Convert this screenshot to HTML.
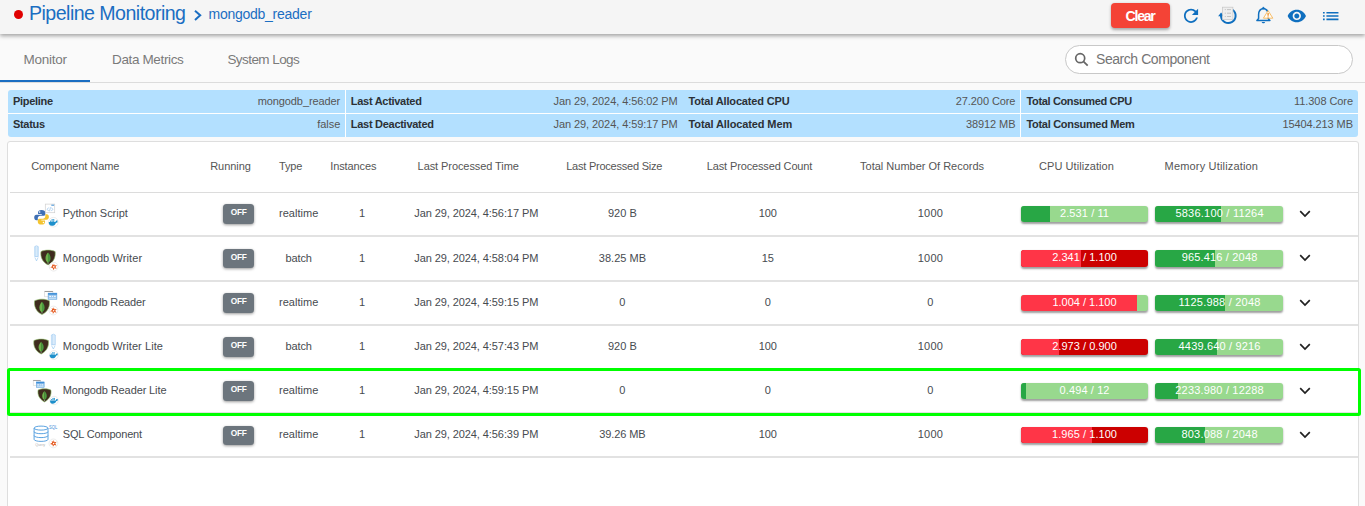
<!DOCTYPE html>
<html lang="en"><head><meta charset="utf-8"><title>Pipeline Monitoring</title>
<style>
html,body{margin:0;padding:0}
body{width:1365px;height:506px;overflow:hidden;position:relative;background:#fafafa;font-family:"Liberation Sans",sans-serif}
.t{position:absolute;white-space:nowrap;display:block}
.abs{position:absolute}
.topbar{position:absolute;left:0;top:0;width:1365px;height:33.8px;background:#f5f5f5;box-shadow:0 2px 4px rgba(0,0,0,.35)}
.dot{position:absolute;left:14px;top:10px;width:9px;height:9px;border-radius:50%;background:#e00000}
.clear{position:absolute;left:1111px;top:3px;width:59px;height:25px;border-radius:4px;background:#f44336;box-shadow:0 1.5px 3px rgba(0,0,0,.32)}
.tabline{position:absolute;left:0;top:82px;width:1365px;height:1px;background:#dcdcdc}
.tabink{position:absolute;left:0;top:80px;width:90px;height:2px;background:#1b6ec2}
.search{position:absolute;left:1065px;top:45px;width:288px;height:28.8px;border:1px solid #c8c8c8;border-radius:15px;background:#fff;box-sizing:border-box}
.info{position:absolute;left:7.5px;top:90px;width:1350.5px;height:47.4px;background:#b3e0ff;border-radius:3px}
.info .h{position:absolute;left:0;top:23px;width:100%;height:1px;background:#fff}
.info .v{position:absolute;top:0;width:1.5px;height:100%;background:#fff}
.card{position:absolute;left:7px;top:141px;width:1352px;height:380px;background:#fff;border:1px solid #dedede;border-radius:3px;box-sizing:border-box}
.hl{position:absolute;left:10px;top:192px;width:1348px;height:1px;background:#dcdcdc}
.rl{position:absolute;left:10px;width:1348px;height:2px;background:#e2e2e2}
.bar{position:absolute;height:16.3px;border-radius:3px;overflow:hidden;box-shadow:0 1.5px 2px rgba(0,0,0,.38)}
.bar i{position:absolute;left:0;top:0;height:100%;display:block}
.off{position:absolute;left:223px;width:30.8px;height:19.6px;border-radius:3.5px;background:#6c757d;box-shadow:0 1px 3px rgba(0,0,0,.4)}
.chev{position:absolute;left:1298px}
.sel{position:absolute;left:7.4px;top:367.8px;width:1353.5px;height:48px;border:3px solid #00ff00;border-radius:2.5px;box-sizing:border-box}

</style></head>
<body>
<div class="topbar"></div>
<div class="dot"></div>
<div class="clear"></div>
<div class="tabline"></div>
<div class="tabink"></div>
<div class="search"></div>
<div class="info"><div class="h"></div><div class="v" style="left:337px"></div><div class="v" style="left:1012px"></div></div>
<div class="card"></div>
<div class="hl"></div>

<div class="bar" style="left:1021px;top:205.9px;width:127px;background:#98d98e"><i style="width:29.2px;background:#28a745"></i></div>
<div class="bar" style="left:1155px;top:205.9px;width:128px;background:#98d98e"><i style="width:66.3px;background:#28a745"></i></div>
<div class="off" style="top:204.4px"></div>
<svg class="chev" style="top:208.8px" width="14" height="10" viewBox="0 0 14 10"><path d="M2.2 2.2 L7 7 L11.8 2.2" fill="none" stroke="#212121" stroke-width="1.7"/></svg>
<div class="rl" style="top:235.0px"></div>
<div class="bar" style="left:1021px;top:250.3px;width:127px;background:#cc0000"><i style="width:59.7px;background:#ff3547"></i></div>
<div class="bar" style="left:1155px;top:250.3px;width:128px;background:#98d98e"><i style="width:60.3px;background:#28a745"></i></div>
<div class="off" style="top:248.8px"></div>
<svg class="chev" style="top:253.2px" width="14" height="10" viewBox="0 0 14 10"><path d="M2.2 2.2 L7 7 L11.8 2.2" fill="none" stroke="#212121" stroke-width="1.7"/></svg>
<div class="rl" style="top:280.0px"></div>
<div class="bar" style="left:1021px;top:294.6px;width:127px;background:#98d98e"><i style="width:115.9px;background:#ff3547"></i></div>
<div class="bar" style="left:1155px;top:294.6px;width:128px;background:#98d98e"><i style="width:70.4px;background:#28a745"></i></div>
<div class="off" style="top:293.1px"></div>
<svg class="chev" style="top:297.5px" width="14" height="10" viewBox="0 0 14 10"><path d="M2.2 2.2 L7 7 L11.8 2.2" fill="none" stroke="#212121" stroke-width="1.7"/></svg>
<div class="rl" style="top:324.0px"></div>
<div class="bar" style="left:1021px;top:338.9px;width:127px;background:#cc0000"><i style="width:38.4px;background:#ff3547"></i></div>
<div class="bar" style="left:1155px;top:338.9px;width:128px;background:#98d98e"><i style="width:61.7px;background:#28a745"></i></div>
<div class="off" style="top:337.4px"></div>
<svg class="chev" style="top:341.8px" width="14" height="10" viewBox="0 0 14 10"><path d="M2.2 2.2 L7 7 L11.8 2.2" fill="none" stroke="#212121" stroke-width="1.7"/></svg>
<div class="rl" style="top:368.0px"></div>
<div class="bar" style="left:1021px;top:382.9px;width:127px;background:#98d98e"><i style="width:5.2px;background:#28a745"></i></div>
<div class="bar" style="left:1155px;top:382.9px;width:128px;background:#98d98e"><i style="width:23.3px;background:#28a745"></i></div>
<div class="off" style="top:381.4px"></div>
<svg class="chev" style="top:385.8px" width="14" height="10" viewBox="0 0 14 10"><path d="M2.2 2.2 L7 7 L11.8 2.2" fill="none" stroke="#212121" stroke-width="1.7"/></svg>
<div class="rl" style="top:412.0px"></div>
<div class="bar" style="left:1021px;top:427.0px;width:127px;background:#cc0000"><i style="width:71.1px;background:#ff3547"></i></div>
<div class="bar" style="left:1155px;top:427.0px;width:128px;background:#98d98e"><i style="width:50.2px;background:#28a745"></i></div>
<div class="off" style="top:425.5px"></div>
<svg class="chev" style="top:429.9px" width="14" height="10" viewBox="0 0 14 10"><path d="M2.2 2.2 L7 7 L11.8 2.2" fill="none" stroke="#212121" stroke-width="1.7"/></svg>
<div class="rl" style="top:456.0px"></div>
<svg class="abs" style="left:0;top:0" width="1365" height="506" viewBox="0 0 1365 506">
<path transform="translate(1180.4 5.2) scale(.885)" fill="#0f6fbf" d="M17.65 6.35C16.2 4.9 14.21 4 12 4c-4.42 0-7.99 3.58-7.99 8s3.57 8 7.99 8c3.73 0 6.84-2.55 7.73-6h-2.08c-.82 2.33-3.04 4-5.65 4-3.31 0-6-2.69-6-6s2.69-6 6-6c1.66 0 3.14.69 4.22 1.78L13 11h7V4l-2.35 2.35z"/>
<path d="M1232.49 9.72 A7.3 7.3 0 1 1 1221.00 16.00" fill="none" stroke="#0f6fbf" stroke-width="2"/>
<path d="M1218.10 16.30 L1221.10 12.50 L1223.90 16.30Z" fill="#0f6fbf"/>
<rect x="1222.6" y="7.2" width="10.3" height="12.3" fill="#eeeeee" stroke="#c6c6c6" stroke-width=".7"/>
<path d="M1224.8 9.6 h1 M1227 9.6 h4" stroke="#bdbdbd" stroke-width=".9"/>
<path d="M1224.8 13.2 h1 M1227 13.2 h4" stroke="#bdbdbd" stroke-width=".9"/>
<path d="M1224.8 16.5 h1 M1227 16.5 h4" stroke="#bdbdbd" stroke-width=".9"/>
<path d="M1263.4 8.4 C1259.9 8.9 1258.6 11.6 1258.6 14.6 V18.6 L1256.9 20.4 H1269.9 L1268.2 18.6 V14.6 C1268.2 11.6 1266.9 8.9 1263.4 8.4Z" fill="none" stroke="#0f6fbf" stroke-width="1.5" stroke-linejoin="round"/>
<path d="M1262.1 8.8 L1263.4 6.9 L1264.7 8.8Z" fill="#0f6fbf" stroke="#0f6fbf" stroke-width=".8"/>
<path d="M1261.7 21.9 H1265.1 C1264.9 23.6 1261.9 23.6 1261.7 21.9Z" fill="#0f6fbf"/>
<path d="M1268.1 10.6 L1272.8 18.2 H1263.4Z" fill="#fffdf8" stroke="#f5a83a" stroke-width=".75" stroke-linejoin="round"/>
<path d="M1268.1 12.9 V15.7 M1268.1 16.5 V17.5" stroke="#ee8a1c" stroke-width="1.25"/>
<path transform="translate(1286.8 5.9) scale(.8333)" fill="#0f6fbf" d="M12 4.5C7 4.5 2.73 7.61 1 12c1.73 4.39 6 7.5 11 7.5s9.27-3.11 11-7.5c-1.73-4.39-6-7.5-11-7.5zM12 17c-2.76 0-5-2.24-5-5s2.24-5 5-5 5 2.24 5 5-2.24 5-5 5zm0-8c-1.66 0-3 1.34-3 3s1.34 3 3 3 3-1.34 3-3-1.34-3-3-3z"/>
<path transform="translate(1320.4 6.2) scale(.86 .82)" fill="#0f6fbf" d="M3 13h2v-2H3v2zm0 4h2v-2H3v2zm0-8h2V7H3v2zm4 4h14v-2H7v2zm0 4h14v-2H7v2zM7 7v2h14V7H7z"/>
<path d="M195 10.7 L200.2 15.3 L195 19.9" fill="none" stroke="#1b6ec2" stroke-width="2"/>
<circle cx="1080.2" cy="58.2" r="4.5" fill="none" stroke="#666" stroke-width="1.7"/><path d="M1083.6 61.6 L1087.7 65.6" stroke="#666" stroke-width="1.8"/>
<g transform="translate(34.2 209.9) scale(0.9932432432432432)"><path d="M7.4 0 C5 0 3.9 1 3.9 2.6 V4.2 H7.6 V4.9 H2.3 C0.8 4.9 0 6.2 0 7.6 C0 9.2 0.8 10.3 2.2 10.3 H3.6 V8.4 C3.6 7 4.8 6 6.1 6 H9.4 C10.5 6 11.2 5.2 11.2 4.1 V2.6 C11.2 1 9.8 0 7.4 0 Z" fill="#3e6fb4"/><circle cx="5.5" cy="2.1" r=".75" fill="#fff"/><g transform="rotate(180 7.4 7.4)"><path d="M7.4 0 C5 0 3.9 1 3.9 2.6 V4.2 H7.6 V4.9 H2.3 C0.8 4.9 0 6.2 0 7.6 C0 9.2 0.8 10.3 2.2 10.3 H3.6 V8.4 C3.6 7 4.8 6 6.1 6 H9.4 C10.5 6 11.2 5.2 11.2 4.1 V2.6 C11.2 1 9.8 0 7.4 0 Z" fill="#f4c430"/><circle cx="5.5" cy="2.1" r=".75" fill="#fff"/></g></g>
<rect x="45.3" y="204.1" width="9.4" height="8.6" fill="#fff" stroke="#cfcfcf" stroke-width=".7"/><rect x="51.3" y="204.6" width="2.8" height="1.2" fill="#5aa0dc"/><path d="M48.699999999999996 207.5 L47.199999999999996 209.29999999999998 L48.699999999999996 211.1 M51.3 207.5 L52.8 209.29999999999998 L51.3 211.1 M50.5 207.29999999999998 L49.5 211.29999999999998" fill="none" stroke="#9cc7ee" stroke-width=".8"/>
<circle cx="53.4" cy="222.2" r="4.8" fill="#fff" stroke="#e4e4e4" stroke-width=".7"/><g transform="translate(53.3 222.29999999999998) scale(1.2730434782608695)" fill="#1d8fcb"><path d="M-3.6 -0.2 H1.6 C1.9 -1.3 2.6 -1.7 3.5 -1.3 C3.1 -0.9 3.1 -0.5 3.4 -0.1 C2.9 0.3 2.5 0.3 2.1 0.3 C1.6 2 0.3 2.8 -1.2 2.8 C-2.8 2.8 -3.6 1.6 -3.6 -0.2Z"/><rect x="-2.6" y="-1.3" width="1" height=".9"/><rect x="-1.4" y="-1.3" width="1" height=".9"/><rect x="-0.2" y="-1.3" width="1" height=".9"/><rect x="-1.4" y="-2.4" width="1" height=".9"/><rect x="-0.2" y="-2.4" width="1" height=".9"/></g>
<g fill="none" stroke="#8fc3f0" stroke-width=".6"><path d="M34.70 256.56 V246.60 Q36.50 245.00 38.30 246.60 V256.56 Z"/><path d="M35.80 246.40 V256.56 M37.20 246.40 V256.56"/><path d="M34.90 257.46 L36.50 260.90 L38.10 257.46"/></g>
<path d="M48.05 250.10 C45.40 250.10 42.76 250.69 40.99 251.58 C40.26 256.76 42.17 261.94 48.05 264.90 C53.93 261.94 55.84 256.76 55.11 251.58 C53.34 250.69 50.70 250.10 48.05 250.10Z" fill="#3f2c1e" stroke="#8fc06a" stroke-width=".6"/><path d="M48.05 252.62 C45.99 254.54 44.96 257.50 45.84 260.16 C46.43 261.64 47.61 262.53 48.05 262.98Z" fill="#6db24b"/><path d="M48.05 252.62 C50.11 254.54 51.14 257.50 50.26 260.16 C49.67 261.64 48.49 262.53 48.05 262.98Z" fill="#4a9a3f"/><path d="M48.05 262.53 L48.05 264.01" stroke="#b9c7c3" stroke-width=".6"/>
<circle cx="53.6" cy="266.7" r="4.4" fill="#fff" stroke="#e4e4e4" stroke-width=".7"/><g transform="translate(53.6 266.7) scale(1.0713043478260873)"><path d="M0.3 -3.1 L1.0 -1.1 L3.1 -1.5 L1.7 0.2 L2.9 2.0 L0.7 1.5 L-0.4 3.2 L-0.8 1.2 L-3.1 0.6 L-1.2 -0.5 L-1.6 -2.4 L-0.2 -1.3Z" fill="#e4561b"/><circle cx="0.2" cy="0.2" r=".75" fill="#fff"/></g>
<path d="M42.00 299.20 C39.23 299.20 36.46 299.82 34.61 300.74 C33.84 306.13 35.84 311.52 42.00 314.60 C48.16 311.52 50.16 306.13 49.39 300.74 C47.54 299.82 44.77 299.20 42.00 299.20Z" fill="#3f2c1e" stroke="#8fc06a" stroke-width=".6"/><path d="M42.00 301.82 C39.84 303.82 38.77 306.90 39.69 309.67 C40.31 311.21 41.54 312.14 42.00 312.60Z" fill="#6db24b"/><path d="M42.00 301.82 C44.16 303.82 45.23 306.90 44.31 309.67 C43.69 311.21 42.46 312.14 42.00 312.60Z" fill="#4a9a3f"/><path d="M42.00 312.14 L42.00 313.68" stroke="#b9c7c3" stroke-width=".6"/>
<rect x="44.70" y="291.20" width="8.2" height="5.6" fill="#fff" stroke="#cfcfcf" stroke-width=".6"/><rect x="44.70" y="291.00" width="8.2" height="1" fill="#9a9a9a"/><rect x="48.10" y="293.10" width="8.8" height="6.2" fill="#9cc7ee" stroke="#5a9fdc" stroke-width=".5"/><rect x="48.10" y="293.10" width="8.8" height="1.6" fill="#3f8fd8"/><path d="M49.30 296.40 h1.8 m1 0 h1 m1 0 h1.6" stroke="#fff" stroke-width="1"/><path d="M48.90 298.30 h7.2" stroke="#d9ecfb" stroke-width=".7"/>
<circle cx="53.4" cy="310.5" r="4.4" fill="#fff" stroke="#e4e4e4" stroke-width=".7"/><g transform="translate(53.4 310.5) scale(1.0713043478260873)"><path d="M0.3 -3.1 L1.0 -1.1 L3.1 -1.5 L1.7 0.2 L2.9 2.0 L0.7 1.5 L-0.4 3.2 L-0.8 1.2 L-3.1 0.6 L-1.2 -0.5 L-1.6 -2.4 L-0.2 -1.3Z" fill="#e4561b"/><circle cx="0.2" cy="0.2" r=".75" fill="#fff"/></g>
<path d="M41.15 339.10 C38.43 339.10 35.71 339.70 33.90 340.59 C33.15 345.81 35.11 351.02 41.15 354.00 C47.19 351.02 49.15 345.81 48.40 340.59 C46.59 339.70 43.87 339.10 41.15 339.10Z" fill="#3f2c1e" stroke="#8fc06a" stroke-width=".6"/><path d="M41.15 341.63 C39.04 343.57 37.98 346.55 38.88 349.23 C39.49 350.72 40.70 351.62 41.15 352.06Z" fill="#6db24b"/><path d="M41.15 341.63 C43.26 343.57 44.32 346.55 43.41 349.23 C42.81 350.72 41.60 351.62 41.15 352.06Z" fill="#4a9a3f"/><path d="M41.15 351.62 L41.15 353.11" stroke="#b9c7c3" stroke-width=".6"/>
<g fill="none" stroke="#8fc3f0" stroke-width=".6"><path d="M51.40 344.74 V335.00 Q53.35 333.40 55.30 335.00 V344.74 Z"/><path d="M52.65 334.80 V344.74 M54.05 334.80 V344.74"/><path d="M51.60 345.64 L53.35 349.00 L55.10 345.64"/></g>
<circle cx="53.9" cy="355" r="4.4" fill="#fff" stroke="#e4e4e4" stroke-width=".7"/><g transform="translate(53.8 355.1) scale(1.1669565217391307)" fill="#1d8fcb"><path d="M-3.6 -0.2 H1.6 C1.9 -1.3 2.6 -1.7 3.5 -1.3 C3.1 -0.9 3.1 -0.5 3.4 -0.1 C2.9 0.3 2.5 0.3 2.1 0.3 C1.6 2 0.3 2.8 -1.2 2.8 C-2.8 2.8 -3.6 1.6 -3.6 -0.2Z"/><rect x="-2.6" y="-1.3" width="1" height=".9"/><rect x="-1.4" y="-1.3" width="1" height=".9"/><rect x="-0.2" y="-1.3" width="1" height=".9"/><rect x="-1.4" y="-2.4" width="1" height=".9"/><rect x="-0.2" y="-2.4" width="1" height=".9"/></g>
<path d="M44.50 388.80 C42.09 388.80 39.68 389.32 38.07 390.11 C37.40 394.69 39.14 399.28 44.50 401.90 C49.86 399.28 51.60 394.69 50.93 390.11 C49.32 389.32 46.91 388.80 44.50 388.80Z" fill="#3f2c1e" stroke="#8fc06a" stroke-width=".6"/><path d="M44.50 391.03 C42.62 392.73 41.69 395.35 42.49 397.71 C43.03 399.02 44.10 399.80 44.50 400.20Z" fill="#6db24b"/><path d="M44.50 391.03 C46.38 392.73 47.31 395.35 46.51 397.71 C45.97 399.02 44.90 399.80 44.50 400.20Z" fill="#4a9a3f"/><path d="M44.50 399.80 L44.50 401.11" stroke="#b9c7c3" stroke-width=".6"/>
<g transform="translate(33.2 380.2) scale(.9)"><rect x="0.00" y="0.00" width="8.2" height="5.6" fill="#fff" stroke="#cfcfcf" stroke-width=".6"/><rect x="0.00" y="-0.20" width="8.2" height="1" fill="#9a9a9a"/><rect x="3.40" y="1.90" width="8.8" height="6.2" fill="#9cc7ee" stroke="#5a9fdc" stroke-width=".5"/><rect x="3.40" y="1.90" width="8.8" height="1.6" fill="#3f8fd8"/><path d="M4.60 5.20 h1.8 m1 0 h1 m1 0 h1.6" stroke="#fff" stroke-width="1"/><path d="M4.20 7.10 h7.2" stroke="#d9ecfb" stroke-width=".7"/></g>
<circle cx="54.1" cy="400.5" r="4.2" fill="#fff" stroke="#e4e4e4" stroke-width=".7"/><g transform="translate(54.0 400.6) scale(1.113913043478261)" fill="#1d8fcb"><path d="M-3.6 -0.2 H1.6 C1.9 -1.3 2.6 -1.7 3.5 -1.3 C3.1 -0.9 3.1 -0.5 3.4 -0.1 C2.9 0.3 2.5 0.3 2.1 0.3 C1.6 2 0.3 2.8 -1.2 2.8 C-2.8 2.8 -3.6 1.6 -3.6 -0.2Z"/><rect x="-2.6" y="-1.3" width="1" height=".9"/><rect x="-1.4" y="-1.3" width="1" height=".9"/><rect x="-0.2" y="-1.3" width="1" height=".9"/><rect x="-1.4" y="-2.4" width="1" height=".9"/><rect x="-0.2" y="-2.4" width="1" height=".9"/></g>
<g fill="none" stroke="#4a98dc" stroke-width=".9"><ellipse cx="41.05" cy="428.10" rx="6.95" ry="2.0"/><path d="M34.10 428.10 V439.40 M48.00 428.10 V439.40"/><path d="M34.10 431.70 A6.95 2.0 0 0 0 48.00 431.70"/><path d="M34.10 435.60 A6.95 2.0 0 0 0 48.00 435.60"/><path d="M34.10 439.40 A6.95 2.0 0 0 0 48.00 439.40"/></g><text x="49" y="428.9" font-family="Liberation Sans, sans-serif" font-size="4.6" fill="#3f8fd8" textLength="8.2" lengthAdjust="spacingAndGlyphs">SQL</text><text x="35.2" y="446" font-family="Liberation Sans, sans-serif" font-size="3.8" fill="#b0b0b0" textLength="10" lengthAdjust="spacingAndGlyphs">Query</text>
<circle cx="53.4" cy="443.4" r="4.4" fill="#fff" stroke="#e4e4e4" stroke-width=".7"/><g transform="translate(53.4 443.4) scale(1.0713043478260873)"><path d="M0.3 -3.1 L1.0 -1.1 L3.1 -1.5 L1.7 0.2 L2.9 2.0 L0.7 1.5 L-0.4 3.2 L-0.8 1.2 L-3.1 0.6 L-1.2 -0.5 L-1.6 -2.4 L-0.2 -1.3Z" fill="#e4561b"/><circle cx="0.2" cy="0.2" r=".75" fill="#fff"/></g>
</svg>
<span class="t" style="left:29.00px;top:0.61px;font-size:19.6px;line-height:25px;letter-spacing:-0.536px;color:#1b6ec2;">Pipeline Monitoring</span>
<span class="t" style="left:208.50px;top:5.15px;font-size:14px;line-height:18px;letter-spacing:-0.257px;color:#1b6ec2;">mongodb_reader</span>
<span class="t" style="left:1125.60px;top:6.78px;font-size:14.2px;line-height:18px;letter-spacing:-1.325px;color:#ffffff;font-weight:700;">Clear</span>
<span class="t" style="left:23.50px;top:51.32px;font-size:13.5px;line-height:18px;letter-spacing:-0.253px;color:#7a7a7a;">Monitor</span>
<span class="t" style="left:112.00px;top:51.32px;font-size:13.5px;line-height:18px;letter-spacing:-0.362px;color:#7a7a7a;">Data Metrics</span>
<span class="t" style="left:227.40px;top:51.32px;font-size:13.5px;line-height:18px;letter-spacing:-0.565px;color:#7a7a7a;">System Logs</span>
<span class="t" style="left:1096.00px;top:50.45px;font-size:14px;line-height:18px;letter-spacing:-0.443px;color:#757575;">Search Component</span>
<span class="t" style="left:13.00px;top:94.19px;font-size:11px;line-height:14px;letter-spacing:-0.312px;color:#2c3136;font-weight:700;">Pipeline</span>
<span class="t" style="left:257.67px;top:94.19px;font-size:11px;line-height:14px;letter-spacing:-0.090px;color:#555;">mongodb_reader</span>
<span class="t" style="left:13.00px;top:117.09px;font-size:11px;line-height:14px;letter-spacing:-0.325px;color:#2c3136;font-weight:700;">Status</span>
<span class="t" style="left:317.33px;top:117.09px;font-size:11px;line-height:14px;letter-spacing:-0.070px;color:#555;">false</span>
<span class="t" style="left:350.80px;top:94.19px;font-size:11px;line-height:14px;letter-spacing:-0.284px;color:#2c3136;font-weight:700;">Last Activated</span>
<span class="t" style="left:553.53px;top:94.19px;font-size:11px;line-height:14px;letter-spacing:-0.079px;color:#555;">Jan 29, 2024, 4:56:02 PM</span>
<span class="t" style="left:350.80px;top:117.09px;font-size:11px;line-height:14px;letter-spacing:-0.282px;color:#2c3136;font-weight:700;">Last Deactivated</span>
<span class="t" style="left:553.53px;top:117.09px;font-size:11px;line-height:14px;letter-spacing:-0.079px;color:#555;">Jan 29, 2024, 4:59:17 PM</span>
<span class="t" style="left:688.50px;top:94.19px;font-size:11px;line-height:14px;letter-spacing:-0.150px;color:#2c3136;font-weight:700;">Total Allocated CPU</span>
<span class="t" style="left:955.78px;top:94.19px;font-size:11px;line-height:14px;letter-spacing:-0.083px;color:#555;">27.200 Core</span>
<span class="t" style="left:688.50px;top:117.09px;font-size:11px;line-height:14px;letter-spacing:-0.114px;color:#2c3136;font-weight:700;">Total Allocated Mem</span>
<span class="t" style="left:966.00px;top:117.09px;font-size:11px;line-height:14px;letter-spacing:-0.094px;color:#555;">38912 MB</span>
<span class="t" style="left:1026.50px;top:94.19px;font-size:11px;line-height:14px;letter-spacing:-0.355px;color:#2c3136;font-weight:700;">Total Consumed CPU</span>
<span class="t" style="left:1294.08px;top:94.19px;font-size:11px;line-height:14px;letter-spacing:-0.081px;color:#555;">11.308 Core</span>
<span class="t" style="left:1026.50px;top:117.09px;font-size:11px;line-height:14px;letter-spacing:-0.305px;color:#2c3136;font-weight:700;">Total Consumed Mem</span>
<span class="t" style="left:1282.42px;top:117.09px;font-size:11px;line-height:14px;letter-spacing:-0.089px;color:#555;">15404.213 MB</span>
<span class="t" style="left:31.20px;top:159.39px;font-size:11px;line-height:14px;letter-spacing:-0.083px;color:#555;">Component Name</span>
<span class="t" style="left:210.20px;top:159.39px;font-size:11px;line-height:14px;letter-spacing:-0.047px;color:#555;">Running</span>
<span class="t" style="left:279.00px;top:159.39px;font-size:11px;line-height:14px;letter-spacing:-0.186px;color:#555;">Type</span>
<span class="t" style="left:330.30px;top:159.39px;font-size:11px;line-height:14px;letter-spacing:-0.124px;color:#555;">Instances</span>
<span class="t" style="left:417.60px;top:159.39px;font-size:11px;line-height:14px;letter-spacing:-0.079px;color:#555;">Last Processed Time</span>
<span class="t" style="left:566.20px;top:159.39px;font-size:11px;line-height:14px;letter-spacing:-0.227px;color:#555;">Last Processed Size</span>
<span class="t" style="left:706.80px;top:159.39px;font-size:11px;line-height:14px;letter-spacing:-0.139px;color:#555;">Last Processed Count</span>
<span class="t" style="left:860.10px;top:159.39px;font-size:11px;line-height:14px;letter-spacing:-0.005px;color:#555;">Total Number Of Records</span>
<span class="t" style="left:1039.10px;top:159.39px;font-size:11px;line-height:14px;letter-spacing:0.059px;color:#555;">CPU Utilization</span>
<span class="t" style="left:1164.60px;top:159.39px;font-size:11px;line-height:14px;letter-spacing:0.172px;color:#555;">Memory Utilization</span>
<span class="t" style="left:62.80px;top:206.39px;font-size:11px;line-height:14px;letter-spacing:-0.035px;color:#474b50;">Python Script</span>
<span class="t" style="left:230.85px;top:207.32px;font-size:8.3px;line-height:11px;letter-spacing:-0.347px;color:#fff;font-weight:700;">OFF</span>
<span class="t" style="left:278.95px;top:206.39px;font-size:11px;line-height:14px;letter-spacing:0.054px;color:#474b50;">realtime</span>
<span class="t" style="left:358.94px;top:206.39px;font-size:11px;line-height:14px;letter-spacing:-0.092px;color:#474b50;">1</span>
<span class="t" style="left:414.30px;top:206.39px;font-size:11px;line-height:14px;letter-spacing:-0.086px;color:#474b50;">Jan 29, 2024, 4:56:17 PM</span>
<span class="t" style="left:607.90px;top:206.39px;font-size:11px;line-height:14px;letter-spacing:0.062px;color:#474b50;">920 B</span>
<span class="t" style="left:758.80px;top:206.39px;font-size:11px;line-height:14px;letter-spacing:-0.080px;color:#474b50;">100</span>
<span class="t" style="left:917.80px;top:206.39px;font-size:11px;line-height:14px;letter-spacing:0.172px;color:#474b50;">1000</span>
<span class="t" style="left:1060.00px;top:205.99px;font-size:11px;line-height:14px;letter-spacing:0.097px;color:#fff;">2.531 / 11</span>
<span class="t" style="left:1175.45px;top:205.99px;font-size:11px;line-height:14px;letter-spacing:0.218px;color:#fff;">5836.100 / 11264</span>
<span class="t" style="left:62.80px;top:250.79px;font-size:11px;line-height:14px;letter-spacing:0.095px;color:#474b50;">Mongodb Writer</span>
<span class="t" style="left:230.85px;top:251.72px;font-size:8.3px;line-height:11px;letter-spacing:-0.347px;color:#fff;font-weight:700;">OFF</span>
<span class="t" style="left:285.40px;top:250.79px;font-size:11px;line-height:14px;letter-spacing:-0.081px;color:#474b50;">batch</span>
<span class="t" style="left:358.94px;top:250.79px;font-size:11px;line-height:14px;letter-spacing:-0.092px;color:#474b50;">1</span>
<span class="t" style="left:414.30px;top:250.79px;font-size:11px;line-height:14px;letter-spacing:-0.086px;color:#474b50;">Jan 29, 2024, 4:58:04 PM</span>
<span class="t" style="left:598.75px;top:250.79px;font-size:11px;line-height:14px;letter-spacing:0.029px;color:#474b50;">38.25 MB</span>
<span class="t" style="left:761.82px;top:250.79px;font-size:11px;line-height:14px;letter-spacing:-0.092px;color:#474b50;">15</span>
<span class="t" style="left:917.80px;top:250.79px;font-size:11px;line-height:14px;letter-spacing:0.172px;color:#474b50;">1000</span>
<span class="t" style="left:1052.15px;top:250.39px;font-size:11px;line-height:14px;letter-spacing:0.039px;color:#fff;">2.341 / 1.100</span>
<span class="t" style="left:1181.70px;top:250.39px;font-size:11px;line-height:14px;letter-spacing:0.169px;color:#fff;">965.416 / 2048</span>
<span class="t" style="left:62.80px;top:295.09px;font-size:11px;line-height:14px;letter-spacing:-0.170px;color:#474b50;">Mongodb Reader</span>
<span class="t" style="left:230.85px;top:296.02px;font-size:8.3px;line-height:11px;letter-spacing:-0.347px;color:#fff;font-weight:700;">OFF</span>
<span class="t" style="left:278.95px;top:295.09px;font-size:11px;line-height:14px;letter-spacing:0.054px;color:#474b50;">realtime</span>
<span class="t" style="left:358.94px;top:295.09px;font-size:11px;line-height:14px;letter-spacing:-0.092px;color:#474b50;">1</span>
<span class="t" style="left:414.30px;top:295.09px;font-size:11px;line-height:14px;letter-spacing:-0.086px;color:#474b50;">Jan 29, 2024, 4:59:15 PM</span>
<span class="t" style="left:619.34px;top:295.09px;font-size:11px;line-height:14px;letter-spacing:-0.092px;color:#474b50;">0</span>
<span class="t" style="left:764.84px;top:295.09px;font-size:11px;line-height:14px;letter-spacing:-0.092px;color:#474b50;">0</span>
<span class="t" style="left:927.24px;top:295.09px;font-size:11px;line-height:14px;letter-spacing:-0.092px;color:#474b50;">0</span>
<span class="t" style="left:1052.40px;top:294.69px;font-size:11px;line-height:14px;letter-spacing:-0.003px;color:#fff;">1.004 / 1.100</span>
<span class="t" style="left:1178.60px;top:294.69px;font-size:11px;line-height:14px;letter-spacing:0.221px;color:#fff;">1125.988 / 2048</span>
<span class="t" style="left:62.80px;top:339.39px;font-size:11px;line-height:14px;letter-spacing:0.069px;color:#474b50;">Mongodb Writer Lite</span>
<span class="t" style="left:230.85px;top:340.32px;font-size:8.3px;line-height:11px;letter-spacing:-0.347px;color:#fff;font-weight:700;">OFF</span>
<span class="t" style="left:285.40px;top:339.39px;font-size:11px;line-height:14px;letter-spacing:-0.081px;color:#474b50;">batch</span>
<span class="t" style="left:358.94px;top:339.39px;font-size:11px;line-height:14px;letter-spacing:-0.092px;color:#474b50;">1</span>
<span class="t" style="left:414.30px;top:339.39px;font-size:11px;line-height:14px;letter-spacing:-0.086px;color:#474b50;">Jan 29, 2024, 4:57:43 PM</span>
<span class="t" style="left:607.90px;top:339.39px;font-size:11px;line-height:14px;letter-spacing:0.062px;color:#474b50;">920 B</span>
<span class="t" style="left:758.80px;top:339.39px;font-size:11px;line-height:14px;letter-spacing:-0.080px;color:#474b50;">100</span>
<span class="t" style="left:917.80px;top:339.39px;font-size:11px;line-height:14px;letter-spacing:0.172px;color:#474b50;">1000</span>
<span class="t" style="left:1052.15px;top:338.99px;font-size:11px;line-height:14px;letter-spacing:0.039px;color:#fff;">2.973 / 0.900</span>
<span class="t" style="left:1178.60px;top:338.99px;font-size:11px;line-height:14px;letter-spacing:0.162px;color:#fff;">4439.640 / 9216</span>
<span class="t" style="left:62.80px;top:383.39px;font-size:11px;line-height:14px;letter-spacing:-0.116px;color:#474b50;">Mongodb Reader Lite</span>
<span class="t" style="left:230.85px;top:384.32px;font-size:8.3px;line-height:11px;letter-spacing:-0.347px;color:#fff;font-weight:700;">OFF</span>
<span class="t" style="left:278.95px;top:383.39px;font-size:11px;line-height:14px;letter-spacing:0.054px;color:#474b50;">realtime</span>
<span class="t" style="left:358.94px;top:383.39px;font-size:11px;line-height:14px;letter-spacing:-0.092px;color:#474b50;">1</span>
<span class="t" style="left:414.30px;top:383.39px;font-size:11px;line-height:14px;letter-spacing:-0.086px;color:#474b50;">Jan 29, 2024, 4:59:15 PM</span>
<span class="t" style="left:619.34px;top:383.39px;font-size:11px;line-height:14px;letter-spacing:-0.092px;color:#474b50;">0</span>
<span class="t" style="left:764.84px;top:383.39px;font-size:11px;line-height:14px;letter-spacing:-0.092px;color:#474b50;">0</span>
<span class="t" style="left:927.24px;top:383.39px;font-size:11px;line-height:14px;letter-spacing:-0.092px;color:#474b50;">0</span>
<span class="t" style="left:1059.50px;top:382.99px;font-size:11px;line-height:14px;letter-spacing:0.118px;color:#fff;">0.494 / 12</span>
<span class="t" style="left:1175.30px;top:382.99px;font-size:11px;line-height:14px;letter-spacing:0.184px;color:#fff;">2233.980 / 12288</span>
<span class="t" style="left:62.80px;top:427.49px;font-size:11px;line-height:14px;letter-spacing:-0.186px;color:#474b50;">SQL Component</span>
<span class="t" style="left:230.85px;top:428.42px;font-size:8.3px;line-height:11px;letter-spacing:-0.347px;color:#fff;font-weight:700;">OFF</span>
<span class="t" style="left:278.95px;top:427.49px;font-size:11px;line-height:14px;letter-spacing:0.054px;color:#474b50;">realtime</span>
<span class="t" style="left:358.94px;top:427.49px;font-size:11px;line-height:14px;letter-spacing:-0.092px;color:#474b50;">1</span>
<span class="t" style="left:414.30px;top:427.49px;font-size:11px;line-height:14px;letter-spacing:-0.086px;color:#474b50;">Jan 29, 2024, 4:56:39 PM</span>
<span class="t" style="left:599.16px;top:427.49px;font-size:11px;line-height:14px;letter-spacing:-0.088px;color:#474b50;">39.26 MB</span>
<span class="t" style="left:758.80px;top:427.49px;font-size:11px;line-height:14px;letter-spacing:-0.080px;color:#474b50;">100</span>
<span class="t" style="left:917.80px;top:427.49px;font-size:11px;line-height:14px;letter-spacing:0.172px;color:#474b50;">1000</span>
<span class="t" style="left:1052.00px;top:427.09px;font-size:11px;line-height:14px;letter-spacing:0.064px;color:#fff;">1.965 / 1.100</span>
<span class="t" style="left:1181.45px;top:427.09px;font-size:11px;line-height:14px;letter-spacing:0.207px;color:#fff;">803.088 / 2048</span>
<div class="sel"></div>
</body></html>
